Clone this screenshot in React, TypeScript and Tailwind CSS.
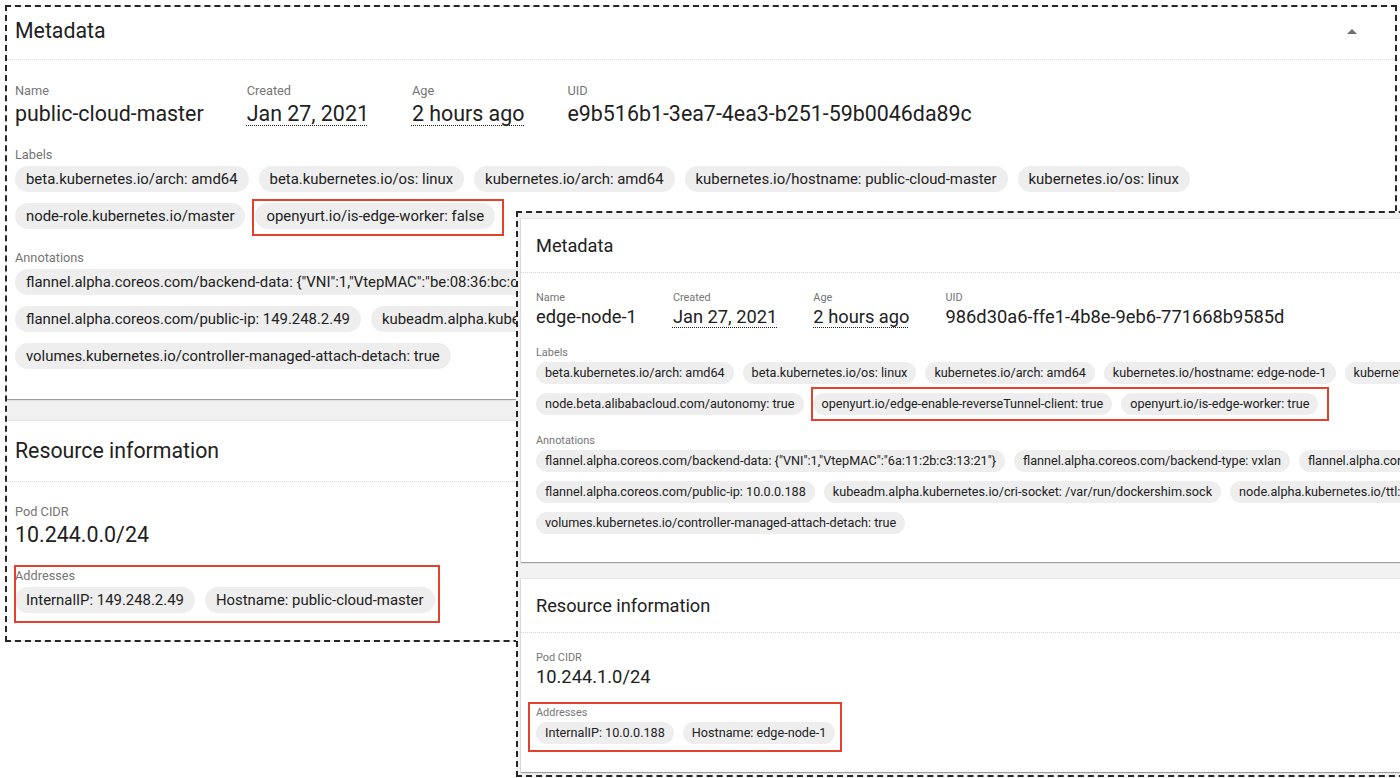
import type { FC, ReactNode } from 'react';

type Size = 'lg' | 'sm';

interface NodeInfo {
    name: string;
    uid: string;
    labels: string[];
    marked: string[];
    annotations: string[];
    podCidr: string;
    addresses: string[];
}

const sizes = {
    lg: {
        title: 'text-[21.3px]',
        label: 'text-[12.75px] leading-[16px]',
        value: 'text-[21.4px] leading-[30px]',
        chip: 'h-[26px] px-[11px] text-[14.9px]',
        chips: 'gap-x-[10px] gap-y-[11px]',
        meta: 'gap-x-[43px]',
        pad: 'px-[8px]',
        body: 'pt-[23px]',
        gap1: 'mt-[18px]',
        gap2: 'mt-[3px]',
        gap3: 'mt-[21px]',
    },
    sm: {
        title: 'text-[18.2px]',
        label: 'text-[10.9px] leading-[14px]',
        value: 'text-[18.3px] leading-[24px]',
        chip: 'h-[22px] px-[9px] text-[12.65px]',
        chips: 'gap-x-[9px] gap-y-[9px]',
        meta: 'gap-x-[36px]',
        pad: 'px-[15px]',
        body: 'pt-[18px]',
        gap1: 'mt-[17px]',
        gap2: 'mt-[2px]',
        gap3: 'mt-[19px]',
    },
};

const master: NodeInfo = {
    name: 'public-cloud-master',
    uid: 'e9b516b1-3ea7-4ea3-b251-59b0046da89c',
    labels: [
        'beta.kubernetes.io/arch: amd64',
        'beta.kubernetes.io/os: linux',
        'kubernetes.io/arch: amd64',
        'kubernetes.io/hostname: public-cloud-master',
        'kubernetes.io/os: linux',
        'node-role.kubernetes.io/master',
    ],
    marked: ['openyurt.io/is-edge-worker: false'],
    annotations: [
        'flannel.alpha.coreos.com/backend-data: {"VNI":1,"VtepMAC":"be:08:36:bc:c7:0e"}',
        'flannel.alpha.coreos.com/backend-type: vxlan',
        'flannel.alpha.coreos.com/kube-subnet-manager: true',
        'flannel.alpha.coreos.com/public-ip: 149.248.2.49',
        'kubeadm.alpha.kubernetes.io/cri-socket: /var/run/dockershim.sock',
        'node.alpha.kubernetes.io/ttl: 0',
        'volumes.kubernetes.io/controller-managed-attach-detach: true',
    ],
    podCidr: '10.244.0.0/24',
    addresses: ['InternalIP: 149.248.2.49', 'Hostname: public-cloud-master'],
};

const edge: NodeInfo = {
    name: 'edge-node-1',
    uid: '986d30a6-ffe1-4b8e-9eb6-771668b9585d',
    labels: [
        'beta.kubernetes.io/arch: amd64',
        'beta.kubernetes.io/os: linux',
        'kubernetes.io/arch: amd64',
        'kubernetes.io/hostname: edge-node-1',
        'kubernetes.io/os: linux',
        'node.beta.alibabacloud.com/autonomy: true',
    ],
    marked: ['openyurt.io/edge-enable-reverseTunnel-client: true', 'openyurt.io/is-edge-worker: true'],
    annotations: [
        'flannel.alpha.coreos.com/backend-data: {"VNI":1,"VtepMAC":"6a:11:2b:c3:13:21"}',
        'flannel.alpha.coreos.com/backend-type: vxlan',
        'flannel.alpha.coreos.com/kube-subnet-manager: true',
        'flannel.alpha.coreos.com/public-ip: 10.0.0.188',
        'kubeadm.alpha.kubernetes.io/cri-socket: /var/run/dockershim.sock',
        'node.alpha.kubernetes.io/ttl: 0',
        'volumes.kubernetes.io/controller-managed-attach-detach: true',
    ],
    podCidr: '10.244.1.0/24',
    addresses: ['InternalIP: 10.0.0.188', 'Hostname: edge-node-1'],
};

const Chip: FC<{ text: string; size: Size }> = ({ text, size }) => (
    <span
        className={`inline-flex shrink-0 items-center whitespace-nowrap rounded-full bg-[#eeeeee] text-[#212121] ${sizes[size].chip}`}
    >
        {text}
    </span>
);

// red annotation box drawn over the screenshot
const Marked: FC<{ box: string; className?: string; children: ReactNode }> = ({ box, className = '', children }) => (
    <div className={`relative ${className}`}>
        {children}
        <span className={`pointer-events-none absolute border-2 border-[#e4412c] ${box}`} />
    </div>
);

const Header: FC<{ title: string; size: Size; className: string; pad: string }> = ({ title, size, className, pad }) => (
    <div className={`flex items-center justify-between border-b border-dotted border-[#d8d8d8] ${pad} ${className}`}>
        <h2 className={`font-normal text-[#212121] ${sizes[size].title}`}>{title}</h2>
        <svg width="10" height="5" viewBox="0 0 10 5" className="mr-[30px]">
            <polygon points="0,5 5,0 10,5" fill="#6f6f6f" />
        </svg>
    </div>
);

const Field: FC<{ label: string; value: string; size: Size; dotted?: boolean }> = ({ label, value, size, dotted }) => (
    <div className="flex flex-col">
        <span className={`text-[#757575] ${sizes[size].label}`}>{label}</span>
        <span
            className={`whitespace-nowrap text-[#212121] ${sizes[size].value} ${
                dotted ? 'underline decoration-dotted decoration-1 underline-offset-[4px]' : ''
            }`}
        >
            {value}
        </span>
    </div>
);

const MetadataCard: FC<{
    node: NodeInfo;
    size: Size;
    header: string;
    pb: string;
    markBox: string;
}> = ({ node, size, header, pb, markBox }) => {
    const s = sizes[size];
    return (
        <div className="bg-white shadow-[0_1px_1px_rgba(0,0,0,0.3),0_0_0_1px_rgba(0,0,0,0.05)]">
            <Header title="Metadata" size={size} className={header} pad={s.pad} />
            <div className={`${s.pad} ${s.body} ${pb}`}>
                <div className={`flex ${s.meta}`}>
                    <Field label="Name" value={node.name} size={size} />
                    <Field label="Created" value="Jan 27, 2021" size={size} dotted />
                    <Field label="Age" value="2 hours ago" size={size} dotted />
                    <Field label="UID" value={node.uid} size={size} />
                </div>
                <div className={`${s.gap1} text-[#757575] ${s.label}`}>Labels</div>
                <div className={`${s.gap2} flex flex-wrap ${s.chips}`}>
                    {node.labels.map((l) => (
                        <Chip key={l} text={l} size={size} />
                    ))}
                    <Marked box={markBox} className={`flex ${s.chips}`}>
                        {node.marked.map((l) => (
                            <Chip key={l} text={l} size={size} />
                        ))}
                    </Marked>
                </div>
                <div className={`${s.gap3} text-[#757575] ${s.label}`}>Annotations</div>
                <div className={`${s.gap2} flex flex-wrap ${s.chips}`}>
                    {node.annotations.map((a) => (
                        <Chip key={a} text={a} size={size} />
                    ))}
                </div>
            </div>
        </div>
    );
};

const ResourceCard: FC<{
    node: NodeInfo;
    size: Size;
    header: string;
    body: string;
    addrGap: string;
    addrBox: string;
    className?: string;
}> = ({ node, size, header, body, addrGap, addrBox, className = '' }) => {
    const s = sizes[size];
    return (
        <div className={`bg-white shadow-[0_1px_1px_rgba(0,0,0,0.3),0_0_0_1px_rgba(0,0,0,0.05)] ${className}`}>
            <Header title="Resource information" size={size} className={header} pad={s.pad} />
            <div className={`${s.pad} ${body}`}>
                <Field label="Pod CIDR" value={node.podCidr} size={size} />
                <Marked box={addrBox} className={`w-fit ${addrGap}`}>
                    <div className={`text-[#757575] ${s.label}`}>Addresses</div>
                    <div className={`${s.gap2} flex ${s.chips}`}>
                        {node.addresses.map((a) => (
                            <Chip key={a} text={a} size={size} />
                        ))}
                    </div>
                </Marked>
            </div>
        </div>
    );
};

export default function App() {
    return (
        <div className="relative h-[778px] w-[1400px] overflow-hidden bg-white font-['Roboto',sans-serif]">
            <div className="ml-[5px] mt-[5px] flex h-[637px] w-[1392px] flex-col overflow-hidden border-2 border-dashed border-[#262626] bg-[#f0f0f0]">
                <MetadataCard
                    node={master}
                    size="lg"
                    header="h-[53px] pb-[4px]"
                    pb="pb-[30px]"
                    markBox="-left-[3px] -top-[4px] -right-[9px] -bottom-[7px]"
                />
                <ResourceCard
                    node={master}
                    size="lg"
                    header="h-[61px]"
                    body="pt-[22px] pb-[40px]"
                    addrGap="mt-[18px]"
                    addrBox="-left-[1px] -top-[3px] -right-[5px] -bottom-[10px]"
                    className="mt-[22px] flex-1"
                />
            </div>

            <div className="absolute left-[516px] top-[211px] h-[566px] w-[1230px] border-2 border-dashed border-[#262626] bg-[#f2f2f2] pl-[3px] pt-[6px]">
                <MetadataCard
                    node={edge}
                    size="sm"
                    header="h-[54px]"
                    pb="pb-[28px]"
                    markBox="-left-[2px] -top-[6px] -right-[11px] -bottom-[6px]"
                />
                <ResourceCard
                    node={edge}
                    size="sm"
                    header="h-[54px]"
                    body="pt-[18px] pb-[28px]"
                    addrGap="mt-[17px]"
                    addrBox="-left-[8px] -top-[4px] -right-[7px] -bottom-[8px]"
                    className="mt-[17px]"
                />
            </div>
        </div>
    );
}
